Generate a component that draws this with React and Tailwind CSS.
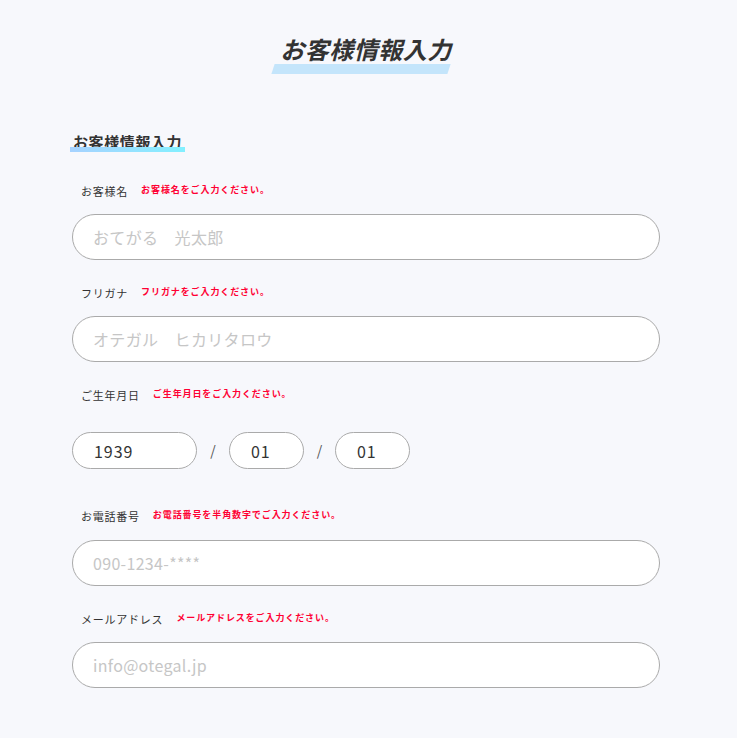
import React from "react";

const jp = { fontFamily: '"Noto Sans CJK JP", "Noto Sans", sans-serif' };

/* LABEL ROW */
const FieldLabel = ({ label, error, gap = "mb-[13px]" }) => (
  <div className={`flex items-center h-[20px] pl-[9px] gap-[13px] ${gap}`}>
    <span className="text-[11px] tracking-[0.07em] text-[#333]">{label}</span>
    <span className="text-[9px] font-bold tracking-[0.1em] text-[#ff0033] mb-[3px]">
      {error}
    </span>
  </div>
);

const TextField = ({ placeholder }) => (
  <input
    type="text"
    readOnly
    placeholder={placeholder}
    className="block w-full h-[46px] rounded-full border border-[#aaaaaa] bg-white pl-[20px] pr-[20px] text-[16px] tracking-[0.02em] text-[#333] placeholder:text-[#c6c6c6] outline-none"
    style={jp}
  />
);

const DateBox = ({ value, width }) => (
  <input
    type="text"
    readOnly
    defaultValue={value}
    className={`block ${width} h-[37px] rounded-full border border-[#aaaaaa] bg-white pl-[21px] text-[16px] tracking-[0.06em] text-[#333] outline-none`}
    style={jp}
  />
);

const Slash = ({ width }) => (
  <span className={`${width} text-center text-[14px] text-[#555]`}>/</span>
);

export default function App() {
  return (
    <div className="min-h-[738px] bg-[#f7f8fc] pl-[72px] pt-[31px] pb-[50px]" style={jp}>
      <div className="w-[588px]">

        {/* PAGE TITLE */}
        <div className="flex flex-col items-center">
          <h1 className="text-[24px] leading-[36px] font-bold italic text-[#333] tracking-[0.02em]">
            お客様情報入力
          </h1>
          <div className="-mt-[3px] -ml-[10px] w-[176px] h-[10px] bg-[#c4e5fb] -skew-x-[18deg]" />
        </div>

        {/* SECTION HEADING */}
        <div className="mt-[60px] mb-[29px] -ml-[2px] inline-flex flex-col">
          <h2 className="px-[3px] text-[15px] leading-[15px] font-bold text-[#333] tracking-[0.04em]">
            お客様情報入力
          </h2>
          <div className="-mt-[2px] h-[5px] bg-gradient-to-r from-[#a6d2ff] to-[#82f0ff]" />
        </div>

        {/* NAME */}
        <div className="mb-[23px]">
          <FieldLabel label="お客様名" error="お客様名をご入力ください。" />
          <TextField placeholder="おてがる　光太郎" />
        </div>

        {/* KANA */}
        <div className="mb-[23px]">
          <FieldLabel label="フリガナ" error="フリガナをご入力ください。" />
          <TextField placeholder="オテガル　ヒカリタロウ" />
        </div>

        {/* BIRTHDAY */}
        <div className="mb-[37px]">
          <FieldLabel label="ご生年月日" error="ご生年月日をご入力ください。" gap="mb-[27px]" />
          <div className="flex items-center">
            <DateBox value="1939" width="w-[125px]" />
            <Slash width="w-[32px]" />
            <DateBox value="01" width="w-[75px]" />
            <Slash width="w-[31px]" />
            <DateBox value="01" width="w-[75px]" />
          </div>
        </div>

        {/* PHONE */}
        <div className="mb-[23px]">
          <FieldLabel label="お電話番号" error="お電話番号を半角数字でご入力ください。" gap="mb-[14px]" />
          <TextField placeholder="090-1234-****" />
        </div>

        {/* MAIL */}
        <div>
          <FieldLabel label="メールアドレス" error="メールアドレスをご入力ください。" />
          <TextField placeholder="info@otegal.jp" />
        </div>

      </div>
    </div>
  );
}
